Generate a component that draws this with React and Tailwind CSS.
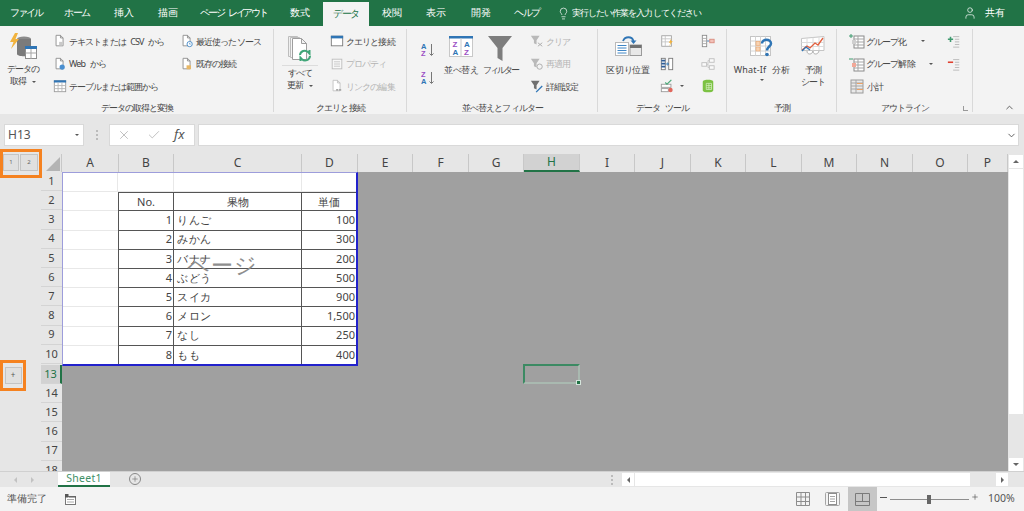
import React from "react";
import { Check, ChevronDown, ChevronUp, Lightbulb, Plus, User, X } from "lucide-react";

const tabs = [
  ["ファイル", "w-[52px] tracking-[-2.2px]"],
  ["ホーム", "w-[50px] tracking-[-1.4px]"],
  ["挿入", "w-[43px]"],
  ["描画", "w-[45px]"],
  ["ページ レイアウト", "w-[87px] tracking-[-2.2px] [word-spacing:4px]"],
  ["数式", "w-[46px]"],
  ["データ", "w-[46px] h-[24px] mt-[2px] bg-[#f3f3f3] text-[#217346] tracking-[-1.5px]"],
  ["校閲", "w-[45px]"],
  ["表示", "w-[44px]"],
  ["開発", "w-[45px]"],
  ["ヘルプ", "w-[48px] tracking-[-1.5px]"],
];

const columns = [
  ["A", "w-[57px]"], ["B", "w-[55px]"], ["C", "w-[128px]"], ["D", "w-[56px]"],
  ["E", "w-[55px]"], ["F", "w-[56px]"], ["G", "w-[55px]"], ["H", "w-[56px]"],
  ["I", "w-[55px]"], ["J", "w-[56px]"], ["K", "w-[55px]"], ["L", "w-[56px]"],
  ["M", "w-[55px]"], ["N", "w-[56px]"], ["O", "w-[55px]"], ["P", "w-[40px]"],
];

const rowNumbers = [1, 2, 3, 4, 5, 6, 7, 8, 9, 10, 13, 14, 15, 16, 17, 18];

const fruits = [
  [1, "りんご", "100"],
  [2, "みかん", "300"],
  [3, "バナナ", "200"],
  [4, "ぶどう", "500"],
  [5, "スイカ", "900"],
  [6, "メロン", "1,500"],
  [7, "なし", "250"],
  [8, "もも", "400"],
];

const Page = ({ color = "#8a8a8a", className = "" }) => (
  <path d="M3.5 1.5h5l3 3v9h-8z M8.5 1.5v3h3" fill="#fff" stroke={color} strokeWidth="1" className={className} />
);

const Icon = ({ children, size = 14, box = 16 }) => (
  <svg width={size} height={size} viewBox={`0 0 ${box} ${box}`} className="shrink-0">{children}</svg>
);

const Caret = ({ className = "" }) => (
  <span className={`inline-block w-0 h-0 border-x-[2px] border-x-transparent border-t-[2.5px] border-t-[#555] ${className}`} />
);

const TextCsvIcon = () => <Icon><Page /><rect x="7" y="9" width="4" height="4" fill="#c9c9c9" /></Icon>;
const WebIcon = () => <Icon><Page /><circle cx="10.5" cy="11.5" r="3" fill="#4a8fd0" /></Icon>;
const TableIcon = () => (
  <Icon>
    <rect x="1.5" y="2" width="13" height="12.5" fill="#fff" stroke="#9a9a9a" />
    <rect x="1" y="1.5" width="14" height="2.5" fill="#2f75b5" />
    <path d="M1.5 7.5h13M1.5 11h13M5.8 4v10M10.2 4v10" stroke="#b5b5b5" />
  </Icon>
);
const RecentIcon = () => <Icon><Page /><circle cx="11" cy="11.5" r="3" fill="#fff" stroke="#3f86c6" /><path d="M11 10v1.6h1.2" stroke="#3f86c6" fill="none" strokeWidth=".8" /></Icon>;
const ExistingIcon = () => <Icon><Page /><rect x="7.5" y="9.5" width="5" height="4.5" fill="#e8b765" /></Icon>;
const QueryIcon = () => (
  <Icon>
    <rect x="1.5" y="2.5" width="13" height="11" fill="#fff" stroke="#777" />
    <rect x="1" y="2" width="14" height="3" fill="#2f75b5" />
  </Icon>
);
const PropIcon = () => (
  <Icon>
    <rect x="2.5" y="2.5" width="11" height="11" fill="#f8f8f8" stroke="#bcbcbc" />
    <path d="M4.5 5.5h7M4.5 8h7M4.5 10.5h7" stroke="#c4c4c4" />
  </Icon>
);
const LinkIcon = () => <Icon><Page color="#c0c0c0" /><path d="M7 12.5h6" stroke="#a8a8a8" strokeWidth="2" strokeDasharray="2.5 .8" /></Icon>;

const GetDataIcon = () => (
  <svg width="28" height="27" viewBox="0 0 28 27">
    <ellipse cx="15" cy="6" rx="7" ry="2.5" fill="#8b8b8b" />
    <path d="M8 6v15c0 3 14 3 14 0V6z" fill="#7b7b7b" />
    <path d="M6 0 1 9h3.5L2 16l8-10H6.5L9 0z" fill="#f2b33d" />
    <rect x="16.5" y="13.5" width="11" height="12" fill="#fff" stroke="#8d8d8d" />
    <rect x="16" y="13" width="12" height="3" fill="#2f75b5" />
    <path d="M16.5 20h11M22 16v10" stroke="#a5a5a5" />
  </svg>
);

const RefreshIcon = () => (
  <svg width="26" height="28" viewBox="0 0 26 28">
    <path d="M1.5 1.5h9v20h-9z" fill="#efefef" stroke="#bdbdbd" />
    <path d="M3.5 2.5h9v20h-9z" fill="#f5f5f5" stroke="#bdbdbd" />
    <path d="M5.5 3.5h9l5 5v16h-14z M14.5 3.5v5h5" fill="#fff" stroke="#9e9e9e" />
    <path d="M13 20a4.8 4.8 0 0 1 8-3l1.500 1.500V15M23 21a4.800 4.800 0 0 1-8 3.200l-1.500-1.500V26" fill="none" stroke="#3fa678" strokeWidth="2" />
  </svg>
);

const SortAzIcon = ({ flip }) => (
  <svg width="14" height="16" viewBox="0 0 14 16">
    <text x="0" y="7" fontSize="7.500" fontWeight="700" fill={flip ? "#9b4fc4" : "#2f75b5"} fontFamily="Liberation Sans">{flip ? "Z" : "A"}</text>
    <text x="0" y="14" fontSize="7.500" fontWeight="700" fill={flip ? "#2f75b5" : "#9b4fc4"} fontFamily="Liberation Sans">{flip ? "A" : "Z"}</text>
    <path d="M10.500 2v11M8.500 11.500l2 2 2-2" fill="none" stroke="#777" />
  </svg>
);

const SortIcon = () => (
  <svg width="24" height="21" viewBox="0 0 24 21">
    <rect x=".5" y=".5" width="23" height="20" fill="#fff" stroke="#c8c8c8" />
    <rect x="0" y="0" width="24" height="2.500" fill="#2f75b5" />
    <path d="M12 2v18" stroke="#c8c8c8" />
    <text x="3.500" y="10.500" fontSize="8" fontWeight="700" fill="#9b4fc4" fontFamily="Liberation Sans">Z</text>
    <text x="3.500" y="18.500" fontSize="8" fontWeight="700" fill="#2f75b5" fontFamily="Liberation Sans">A</text>
    <text x="15" y="10.500" fontSize="8" fontWeight="700" fill="#2f75b5" fontFamily="Liberation Sans">A</text>
    <text x="15" y="18.500" fontSize="8" fontWeight="700" fill="#9b4fc4" fontFamily="Liberation Sans">Z</text>
  </svg>
);

const FunnelIcon = () => (
  <svg width="24" height="25" viewBox="0 0 24 25">
    <path d="M0 0h24L14.500 12v13l-5-3V12z" fill="#7d7d7d" />
  </svg>
);

const SmallFunnel = ({ color = "#b9b9b9", children }) => (
  <Icon>
    <path d="M1 2h10L7.500 7v5l-3-1.500V7z" fill={color} />
    {children}
  </Icon>
);

const SplitIcon = () => (
  <svg width="27" height="20" viewBox="0 0 27 20">
    <rect x=".5" y="6.500" width="13" height="13" fill="#fff" stroke="#b9b9b9" />
    <path d="M2.500 9.500h9M2.500 12h9M2.500 14.500h9M2.500 17h9" stroke="#3f86c6" />
    <rect x="15" y="9" width="11.500" height="10.500" fill="#e8e8e8" stroke="#9a9a9a" />
    <rect x="15" y="9" width="11.500" height="3" fill="#707070" />
    <path d="M8 5C10 0 17 0 18.500 5" fill="none" stroke="#2f75b5" strokeWidth="1.800" />
    <path d="M15.500 4.500h6L18.500 8z" fill="#2f75b5" />
  </svg>
);

const FlashIcon = () => (
  <Icon>
    <rect x="2" y="2" width="11" height="12" fill="#fff" stroke="#a0a0a0" />
    <path d="M2 5.500h11M2 9h11M6 2v12" stroke="#c5c5c5" />
    <path d="M13 5l-3 5h2l-1.500 4 4-6h-2z" fill="#f2b33d" />
  </Icon>
);
const DupIcon = () => (
  <Icon>
    <rect x="1.500" y="1.500" width="4.500" height="13" fill="#fff" stroke="#777" />
    <rect x="10" y="1.500" width="4.500" height="13" fill="#fff" stroke="#777" />
    <path d="M1.500 4h4.500M1.500 7.500h4.500M1.500 11h4.500" stroke="#2f5f9a" strokeWidth="2" />
    <path d="M6.500 8h3M8 6.500l2 1.500-2 1.500" stroke="#2f75b5" fill="none" />
  </Icon>
);
const ValidIcon = () => (
  <Icon>
    <rect x="1.500" y="6" width="11" height="3.500" fill="#fff" stroke="#999" />
    <rect x="1.500" y="11" width="8" height="3.500" fill="#fff" stroke="#999" />
    <path d="M6 4l2 2 5-5" fill="none" stroke="#4aa878" strokeWidth="1.300" />
    <circle cx="12" cy="12.500" r="2.500" fill="#e0675c" />
  </Icon>
);
const ConsolidateIcon = () => (
  <Icon>
    <rect x="1.500" y="1.500" width="5" height="13" fill="#fff" stroke="#8a8a8a" />
    <path d="M1.500 5h5M1.500 8h5M1.500 11h5" stroke="#a5a5a5" />
    <path d="M7 8h3" stroke="#2f75b5" />
    <rect x="10" y="6" width="5" height="4" fill="#f2c1b8" stroke="#d98a7d" />
  </Icon>
);
const RelationIcon = () => (
  <Icon>
    <rect x="1" y="6.500" width="5.500" height="4" fill="#fafafa" stroke="#bcbcbc" />
    <rect x="9.500" y="2" width="5.500" height="4" fill="#fafafa" stroke="#bcbcbc" />
    <rect x="9.500" y="10" width="5.500" height="4" fill="#fafafa" stroke="#bcbcbc" />
    <path d="M6.500 8.500h1.500V4h1.500M8 8.500V12h1.500" fill="none" stroke="#c8c8c8" />
  </Icon>
);
const ModelIcon = () => (
  <Icon>
    <path d="M2 3c0-3 12-3 12 0v10c0 3-12 3-12 0z" fill="#7cc243" />
    <path d="M6 5h6v7H6zM6 7.500h6M6 10h6M9 5v7" fill="none" stroke="#d8efc5" strokeWidth=".8" />
  </Icon>
);

const WhatIfIcon = () => (
  <svg width="24" height="21" viewBox="0 0 24 21">
    <rect x=".5" y=".5" width="20" height="19" fill="#fff" stroke="#c5c5c5" />
    <path d="M.5 5h20M.5 10h20M.5 15h20M5.500.5v19M10.500.5v19M15.500.5v19" stroke="#d4d4d4" />
    <rect x="6" y="5.500" width="4" height="4" fill="#f8d3b2" stroke="#e9a268" strokeWidth=".6" />
    <rect x="6" y="11" width="4" height="4" fill="#f8d3b2" stroke="#e9a268" strokeWidth=".6" />
    <path d="M12 7.500c0-5 9-5 9 0 0 3-4 3-4 7" fill="none" stroke="#2f75b5" strokeWidth="2.500" />
    <circle cx="17" cy="18.500" r="1.800" fill="#2f75b5" />
  </svg>
);
const ForecastIcon = () => (
  <svg width="24" height="21" viewBox="0 0 24 21">
    <path d="M.5 2.500 23 .5v14H.5z" fill="#fff" stroke="#c5c5c5" />
    <path d="M6 2v12M12 1.500v13M18 1v13M.5 6.500h22.500M.5 10.500h22.500" stroke="#dcdcdc" />
    <path d="M1 14l5-4 3 2 5-5 3 2 5-7" fill="none" stroke="#e2603f" strokeWidth="1.300" />
    <path d="M1 15l4-4 4 3" fill="none" stroke="#2f75b5" strokeWidth="1.300" />
    <path d="M6 15c0 4 5 4 6 0 0 4 5 4 6 0" fill="#fff" stroke="#9a9a9a" strokeWidth=".8" />
  </svg>
);

const GroupIcon = ({ sign }) => (
  <Icon size={16}>
    <rect x="5" y="3" width="10" height="12" fill="#fff" stroke="#8a8a8a" />
    <path d="M5 6h10M5 9h10M5 12h10M9 3v12" stroke="#a5a5a5" />
    {sign === "+" ? <path d="M0 3h4M2 1v4" stroke="#3f9a6f" /> : <path d="M0 3h4" stroke="#3f9a6f" />}
    <rect x="3" y="7" width="4" height="4" fill={sign === "+" ? "#cfcfcf" : "#f2a898"} />
  </Icon>
);
const SubtotalIcon = () => (
  <Icon size={16}>
    <rect x="2" y="2" width="12" height="13" fill="#e9e9e9" stroke="#9a9a9a" />
    <path d="M2 5h12M2 8h12M2 11h12M7 2v13" stroke="#a5a5a5" />
    <path d="M8 5.500h6M8 11.500h6" stroke="#e9a268" />
  </Icon>
);
const DetailIcon = ({ color, minus }) => (
  <Icon>
    <path d="M7 3h7M9 6h5M9 9h5M9 12h5M7 15h7" stroke="#b5b5b5" />
    <path d={minus ? "M1 6h6" : "M1 6h6M4 3v6"} stroke={color} strokeWidth="1.800" />
  </Icon>
);

const SmallRow = ({ icon, label, muted }) => (
  <div className={`flex items-center h-[22.5px] gap-[2px] whitespace-nowrap ${muted ? "text-[#b4b4b4]" : "text-[#444]"}`}>
    {icon}
    <span>{label}</span>
  </div>
);

const Group = ({ label, className, children }) => (
  <div className={`flex flex-col shrink-0 relative ${className}`}>
    <div className="flex h-[75px]">{children}</div>
    <div className="h-[13px] leading-[13px] text-center text-[#444] whitespace-nowrap">{label}</div>
    <span className="absolute right-0 top-[3px] bottom-[2px] w-px bg-[#d9d9d9]" />
  </div>
);

const BigButton = ({ icon, lines, caret, className }) => (
  <div className={`flex flex-col items-center text-[#444] ${className}`}>
    <div className="h-[37px] pt-[9px] flex items-start justify-center">{icon}</div>
    {lines.map((l) => (
      <div key={l} className="h-[12px] leading-[12px] whitespace-nowrap">{l}</div>
    ))}
    {caret && <Caret className="mt-[3px]" />}
  </div>
);

const Ribbon = () => (
  <div className="flex h-[88px] bg-[#f3f3f3] text-[9px] tracking-[-0.9px] [word-spacing:3px] shrink-0">
    <Group label="データの取得と変換" className="w-[274px]">
      <div className="w-[46px] flex flex-col items-center pt-[7px] text-[#444]">
        <GetDataIcon />
        <div className="mt-[3px] leading-[12px]">データの</div>
        <div className="leading-[12px]">取得 <Caret className="ml-px align-middle" /></div>
      </div>
      <div className="w-[127px] ml-[7px] pt-1">
        <SmallRow icon={<TextCsvIcon />} label="テキストまたは CSV から" />
        <SmallRow icon={<WebIcon />} label="Web から" />
        <SmallRow icon={<TableIcon />} label="テーブルまたは範囲から" />
      </div>
      <div className="pt-1">
        <SmallRow icon={<RecentIcon />} label="最近使ったソース" />
        <SmallRow icon={<ExistingIcon />} label="既存の接続" />
      </div>
    </Group>

    <Group label="クエリと接続" className="w-[133px]">
      <div className="w-[36px] ml-[8px] mr-[12px] flex flex-col items-center pt-[9px] text-[#444]">
        <RefreshIcon />
        <div className="w-full h-px bg-[#dcdcdc] mt-[2px] mb-[1px]" />
        <div className="leading-[12px]">すべて</div>
        <div className="leading-[12px]">更新 <Caret className="ml-px align-middle" /></div>
      </div>
      <div className="pt-1">
        <SmallRow icon={<QueryIcon />} label="クエリと接続" />
        <SmallRow icon={<PropIcon />} label="プロパティ" muted />
        <SmallRow icon={<LinkIcon />} label="リンクの編集" muted />
      </div>
    </Group>

    <Group label="並べ替えとフィルター" className="w-[191px]">
      <div className="w-[14px] ml-[14px] pt-[16px] flex flex-col gap-[12px]">
        <SortAzIcon />
        <SortAzIcon flip />
      </div>
      <BigButton icon={<SortIcon />} lines={["並べ替え"]} className="w-[40px] ml-[6px] pt-[1px] tracking-[-0.5px]" />
      <BigButton icon={<FunnelIcon />} lines={["フィルター"]} className="w-[38px] pt-[1px] tracking-[-2px]" />
      <div className="ml-[11px] pt-1">
        <SmallRow muted label="クリア" icon={<SmallFunnel><path d="M9 10l5 4M14 10l-5 4" stroke="#a8a8a8" /></SmallFunnel>} />
        <SmallRow muted label="再適用" icon={<SmallFunnel><circle cx="11" cy="11" r="3" fill="none" stroke="#a8a8a8" /></SmallFunnel>} />
        <SmallRow label="詳細設定" icon={<SmallFunnel color="#6f6f6f"><path d="M7 15l7-7" stroke="#2f75b5" strokeWidth="1.500" /></SmallFunnel>} />
      </div>
    </Group>

    <Group label="データ ツール" className="w-[129px]">
      <BigButton icon={<SplitIcon />} lines={["区切り位置"]} className="w-[46px] ml-[7px] pt-[1px] tracking-[-0.2px]" />
      <div className="ml-[9px] w-[41px] pt-1">
        <div className="h-[22.5px] flex items-center"><FlashIcon /></div>
        <div className="h-[22.5px] flex items-center"><DupIcon /></div>
        <div className="h-[22.5px] flex items-center gap-[6px]"><ValidIcon /><Caret /></div>
      </div>
      <div className="pt-1">
        <div className="h-[22.5px] flex items-center"><ConsolidateIcon /></div>
        <div className="h-[22.5px] flex items-center"><RelationIcon /></div>
        <div className="h-[22.5px] flex items-center"><ModelIcon /></div>
      </div>
    </Group>

    <Group label="予測" className="w-[110px]">
      <BigButton icon={<WhatIfIcon />} lines={["What-If 分析"]} caret className="w-[60px] ml-[5px] pt-[1px] tracking-[0.2px]" />
      <BigButton icon={<ForecastIcon />} lines={["予測", "シート"]} className="w-[36px] ml-[3px] pt-[1px]" />
    </Group>

    <Group label="アウトライン" className="w-[136px]">
      <div className="w-[98px] ml-[12px] pt-1">
        <div className="flex items-center h-[22.5px] gap-[1px] text-[#444]"><GroupIcon sign="+" /><span>グループ化</span><Caret className="ml-[13px]" /></div>
        <div className="flex items-center h-[22.5px] gap-[1px] text-[#444]"><GroupIcon sign="-" /><span>グループ解除</span><Caret className="ml-[13px]" /></div>
        <SmallRow icon={<SubtotalIcon />} label="小計" />
      </div>
      <div className="pt-1">
        <div className="h-[22.5px] flex items-center"><DetailIcon color="#3f9a6f" /></div>
        <div className="h-[22.5px] flex items-center"><DetailIcon color="#e0402f" minus /></div>
      </div>
      <span className="absolute right-[5px] bottom-[3px] w-[5px] h-[5px] border-l border-b border-[#999]" />
    </Group>

    <div className="flex-1 flex items-end justify-end pr-[9px] pb-[1px]">
      <ChevronUp size={11} color="#555" strokeWidth={2} />
    </div>
  </div>
);

const FormulaBar = () => (
  <div className="h-[22px] mt-[10px] flex text-[#555] shrink-0">
    <div className="w-[80px] ml-[4px] bg-white border border-[#d9d9d9] flex items-center justify-between pl-[3px] pr-[4px] text-[12px]">
      <span>H13</span>
      <Caret />
    </div>
    <div className="w-[25px] flex flex-col items-center justify-center gap-[2px]">
      <span className="w-[2px] h-[2px] bg-[#bbb]" />
      <span className="w-[2px] h-[2px] bg-[#bbb]" />
      <span className="w-[2px] h-[2px] bg-[#bbb]" />
    </div>
    <div className="w-[86px] bg-white border border-[#d9d9d9] flex items-center">
      <X size={14} color="#b8b8b8" strokeWidth={1.5} className="ml-[7px]" />
      <Check size={14} color="#b8b8b8" strokeWidth={1.5} className="ml-[16px]" />
      <span className="ml-[13px] text-[13px] italic text-[#555] font-['Liberation_Serif',serif]">fx</span>
    </div>
    <div className="w-[821px] ml-[3px] bg-white border border-[#d9d9d9] flex items-center justify-end pr-[1px]">
      <ChevronDown size={11} color="#555" strokeWidth={2} />
    </div>
  </div>
);

const ColumnHeader = () => (
  <div className="flex h-[18px] shrink-0">
    <div className="w-[41px] flex items-start pl-[3px] gap-[1px]">
      <div className="w-[16px] h-[17px] bg-[#e0e0e0] border border-[#c4c4c4] text-[6px] text-[#666] flex items-center justify-center">1</div>
      <div className="w-[18px] h-[17px] bg-[#e0e0e0] border border-[#c4c4c4] text-[6px] text-[#666] flex items-center justify-center">2</div>
    </div>
    <div className="w-[21px] flex items-end justify-end border-r border-[#c8c8c8] pb-px pr-px">
      <span className="w-0 h-0 border-l-[14px] border-l-transparent border-b-[14px] border-b-[#b4b4b4]" />
    </div>
    {columns.map(([name, w]) => (
      <div
        key={name}
        className={`${w} flex items-center justify-center border-r border-[#c8c8c8] text-[12px] ${name === "H" ? "bg-[#d2d2d2] text-[#217346] border-b-2 border-b-[#217346]" : "text-[#444]"}`}
      >
        {name}
      </div>
    ))}
  </div>
);

const RowHeaders = () => (
  <div className="w-[62px] shrink-0 pl-[41px] overflow-hidden">
    {rowNumbers.map((n) => (
      <div
        key={n}
        className={`w-[21px] h-[19.2px] flex items-center justify-center border-b border-[#d4d4d4] text-[11px] ${n === 13 ? "mt-[1px] bg-[#d2d2d2] text-[#217346] border-r-2 border-r-[#217346]" : "text-[#444]"}`}
      >
        {n}
      </div>
    ))}
  </div>
);

const FruitTable = () => (
  <div className="relative w-[296px] bg-white border-t border-l border-[#9d9ddb] border-r-2 border-r-[#2222cc] border-b-2 border-b-[#2222cc] text-[11px] text-[#444]">
    <div className="flex h-[18.2px]">
      <div className="w-[55px] border-r border-[#e8e8e8]" />
      <div className="w-[56px] border-r border-[#e8e8e8]" />
      <div className="w-[128px] border-r border-[#e8e8e8]" />
    </div>
    <div className="flex h-[19.2px] border-t border-[#e8e8e8]">
      <div className="w-[55px]" />
      <div className="w-[56px] flex items-center justify-center border border-b-0 border-[#555]">No.</div>
      <div className="w-[128px] flex items-center justify-center border-t border-r border-[#555]">果物</div>
      <div className="flex-1 flex items-center justify-center border-t border-[#555]">単価</div>
    </div>
    {fruits.map(([no, name, price]) => (
      <div key={no} className="flex h-[19.2px]">
        <div className="w-[55px] border-t border-[#e8e8e8]" />
        <div className="w-[56px] flex items-center justify-end pr-px border-t border-x border-[#555]">{no}</div>
        <div className="w-[128px] flex items-center pl-[3px] border-t border-r border-[#555] tracking-[0.5px]">{name}</div>
        <div className="flex-1 flex items-center justify-end pr-px border-t border-[#555]">{price}</div>
      </div>
    ))}
    <div className="absolute left-[124px] top-[76px] text-[22px] leading-[30px] tracking-[1px] text-[#8e8e8e] font-light whitespace-nowrap">ページ</div>
  </div>
);

const Sheet = () => (
  <div className="flex h-[299px] shrink-0 overflow-hidden">
    <RowHeaders />
    <div className="relative flex-1 bg-[#a0a0a0]">
      <FruitTable />
      <div className="absolute left-[461px] top-[192px] w-[57px] h-[20px] border-2 border-[#3c8a63] border-r-[#a9b9b0] border-b-[#a9b9b0]">
        <span className="absolute -right-[3px] -bottom-[3px] w-[5px] h-[5px] bg-[#217346] border border-[#d5e5dc]" />
      </div>
    </div>
  </div>
);

const VerticalScroll = () => (
  <div className="w-[16px] flex flex-col items-center pt-[1px]">
    <div className="w-[14px] h-[13px] bg-white flex items-center justify-center">
      <span className="w-0 h-0 border-x-[3px] border-x-transparent border-b-[3px] border-b-[#666]" />
    </div>
    <div className="w-[14px] h-[245px] mt-px bg-white" />
    <div className="flex-1" />
    <div className="w-[14px] h-[13px] bg-white flex items-center justify-center">
      <span className="w-0 h-0 border-x-[3px] border-x-transparent border-t-[3px] border-t-[#666]" />
    </div>
  </div>
);

const TabBar = () => (
  <div className="h-[16px] flex items-start bg-[#e6e6e6] shrink-0 border-t border-[#d0d0d0]">
    <span className="ml-[14px] mt-[5px] w-0 h-0 border-y-[3px] border-y-transparent border-r-[3px] border-r-[#c2c2c2]" />
    <span className="ml-[14px] mt-[5px] w-0 h-0 border-y-[3px] border-y-transparent border-l-[3px] border-l-[#c2c2c2]" />
    <div className="w-[52px] h-[15px] ml-[24px] bg-white border-b-2 border-[#217346] text-[#3f8f68] text-[10.500px] leading-[13px] text-center tracking-[0.3px]">Sheet1</div>
    <span className="ml-[19px] mt-[1px] w-[12px] h-[12px] rounded-full border border-[#888] flex items-center justify-center">
      <Plus size={8} color="#777" strokeWidth={2} />
    </span>
    <div className="ml-[466px] w-[10px] h-full flex flex-col items-center justify-center gap-[2px]">
      <span className="w-[2px] h-[2px] bg-[#bbb]" />
      <span className="w-[2px] h-[2px] bg-[#bbb]" />
      <span className="w-[2px] h-[2px] bg-[#bbb]" />
    </div>
    <div className="w-[12px] h-[13px] ml-[5px] mt-[1px] bg-white flex items-center justify-center">
      <span className="w-0 h-0 border-y-[3px] border-y-transparent border-r-[3px] border-r-[#666]" />
    </div>
    <div className="w-[335px] h-[13px] ml-px mt-[1px] bg-white" />
    <div className="w-[26px]" />
    <div className="w-[12px] h-[13px] mt-[1px] bg-white flex items-center justify-center">
      <span className="w-0 h-0 border-y-[3px] border-y-transparent border-l-[3px] border-l-[#666]" />
    </div>
  </div>
);

const StatusBar = () => (
  <div className="h-[24px] flex items-center bg-[#f3f3f3] text-[9.500px] text-[#555] shrink-0">
    <span className="ml-[7px] w-[58px]">準備完了</span>
    <svg width="11" height="11" viewBox="0 0 11 11">
      <rect x=".5" y="2.500" width="10" height="8" fill="#fff" stroke="#777" />
      <rect x="0" y="0" width="3.500" height="3.500" fill="#555" />
      <path d="M4 3h7" stroke="#555" />
      <path d="M2 5.500h7M2 8h7" stroke="#aaa" />
    </svg>
    <div className="flex-1" />
    <svg width="14" height="14" viewBox="0 0 14 14" className="mr-[15px]">
      <path d="M.5.500h13v13H.500zM5 .5v13M9.500.5v13M.5 5h13M.5 9.500h13" fill="none" stroke="#8d8d8d" />
    </svg>
    <svg width="15" height="14" viewBox="0 0 15 14" className="mr-[8px]">
      <rect x=".5" y=".5" width="14" height="13" rx="1" fill="none" stroke="#a5a5a5" />
      <rect x="3.500" y="1.500" width="8" height="11" fill="#fff" stroke="#8d8d8d" />
      <path d="M5 4.500h5M5 7h5M5 9.500h5" stroke="#a5a5a5" />
    </svg>
    <div className="w-[29px] h-full bg-[#c6c6c6] flex items-center justify-center">
      <svg width="15" height="13" viewBox="0 0 15 13">
        <path d="M.5.500h14v12H.500zM.5 8.500h14M7.500.5v8" fill="none" stroke="#7a7a7a" />
      </svg>
    </div>
    <span className="ml-[3px] w-[7px] h-px bg-[#555] -mt-[4px]" />
    <div className="relative ml-[3px] w-[79px] h-px bg-[#8d8d8d]">
      <span className="absolute left-[37px] -top-[4px] w-[4px] h-[9px] bg-[#666]" />
    </div>
    <Plus size={8} color="#555" strokeWidth={2} className="ml-[2px] -mt-[4px]" />
    <span className="ml-[9px] w-[36px] text-[10.500px]">100%</span>
  </div>
);

export default function App() {
  return (
    <div className="relative w-[1024px] h-[511px] overflow-hidden flex flex-col bg-[#e6e6e6] font-['Noto_Sans_CJK_JP','Noto_Sans',sans-serif]">
      <div className="h-[26px] flex bg-[#217346] text-white text-[9.500px] shrink-0">
        {tabs.map(([name, w]) => (
          <div key={name} className={`${w} flex items-center justify-center whitespace-nowrap`}>{name}</div>
        ))}
        <div className="flex items-center">
          <Lightbulb size={13} strokeWidth={1.3} className="ml-[6px]" />
          <span className="ml-[2px] text-[9px] tracking-[-0.95px]">実行したい作業を入力してください</span>
        </div>
        <div className="flex-1" />
        <div className="flex items-center gap-[8px] pr-[19px]">
          <User size={14} strokeWidth={1.2} />
          <span>共有</span>
        </div>
      </div>

      <Ribbon />
      <FormulaBar />

      <div className="flex mt-[8px]">
        <div className="flex flex-col w-[1008px]">
          <ColumnHeader />
          <Sheet />
        </div>
        <VerticalScroll />
      </div>

      <TabBar />
      <StatusBar />

      {/* orange callouts added on top of the capture */}
      <div className="absolute left-0 top-[149px] w-[42px] h-[29px] border-[3px] border-[#f58220]" />
      <div className="absolute left-0 top-[360px] w-[26px] h-[31px] border-[3px] border-[#f58220] flex items-center justify-center">
        <span className="w-[17px] h-[17px] bg-[#e0e0e0] border border-[#c4c4c4] text-[8px] leading-[14px] text-center text-[#555]">+</span>
      </div>
    </div>
  );
}
